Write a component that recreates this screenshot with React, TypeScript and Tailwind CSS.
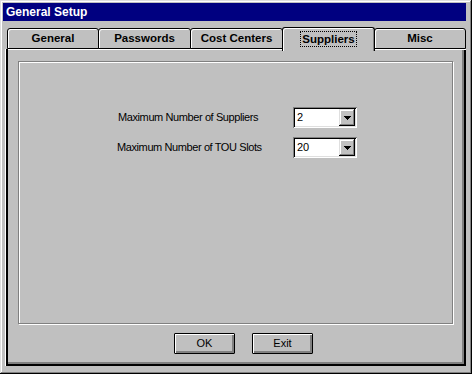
import React from "react";

const tabs = ["General", "Passwords", "Cost Centers", "Suppliers", "Misc"];
const tabWidths = [92, 93, 93, 93, 92];

function Combo({ value }: { value: string }) {
  return (
    <div className="w-[64px] h-[21px] bg-white flex p-[2px] shadow-[inset_1px_1px_0_#808080,inset_-1px_-1px_0_#fff,inset_2px_2px_0_#000,inset_-2px_-2px_0_#dfdfdf]">
      <div className="flex-1 pl-[2px] text-[11px] leading-[17px] text-black">{value}</div>
      <div className="w-[16px] h-[17px] bg-[#c0c0c0] flex items-center justify-center shadow-[inset_-1px_-1px_0_#000,inset_1px_1px_0_#dfdfdf,inset_-2px_-2px_0_#808080,inset_2px_2px_0_#fff]">
        <svg width="7" height="4" viewBox="0 0 7 4" shapeRendering="crispEdges">
          <path d="M0 0h7v1H0zM1 1h5v1H1zM2 2h3v1H2zM3 3h1v1H3z" fill="#000" />
        </svg>
      </div>
    </div>
  );
}

function Button({ label }: { label: string }) {
  return (
    <div className="w-[61px] h-[21px] border border-black rounded-[1px] bg-[#c0c0c0] flex items-center justify-center text-[11px] text-black shadow-[inset_1px_1px_0_#fff,inset_-2px_-2px_0_#808080]">
      {label}
    </div>
  );
}

export default function App() {
  return (
    <div className="w-[472px] h-[374px] bg-[#c0c0c0] pt-[3px] pl-[3px] pr-[6px] font-['Liberation_Sans',Arial,sans-serif] shadow-[inset_-1px_-1px_0_#000,inset_1px_1px_0_#dfdfdf,inset_-2px_-2px_0_#808080,inset_2px_2px_0_#fff]">
      <div className="h-[18px] bg-[#000080] flex items-center pl-[3px] text-white font-bold text-[12px]">
        General Setup
      </div>

      <div className="ml-[2px] mt-[6px] w-[461px]">
        <div className="flex h-[22px] pl-[2px] items-start">
          {tabs.map((t, i) => {
            const selected = t === "Suppliers";
            return (
              <div
                key={t}
                style={{ width: tabWidths[i] }}
                className={
                  selected
                    ? "relative z-10 -ml-px h-[24px] bg-[#c0c0c0] border-l border-t border-r border-black rounded-t-[3px] flex justify-center pt-[3px] shadow-[inset_1px_1px_0_#fff,inset_-1px_0_0_#808080]"
                    : "relative -ml-px first:ml-0 mt-[1px] h-[21px] bg-[#c0c0c0] border border-black rounded-t-[3px] flex justify-center items-center shadow-[inset_1px_1px_0_#fff]"
                }
              >
                <span
                  className={
                    selected
                      ? "border border-dotted border-black px-[1px] h-[16px] leading-[14px] text-[11.5px] font-bold text-black"
                      : "text-[11.5px] font-bold text-black"
                  }
                >
                  {t}
                </span>
              </div>
            );
          })}
        </div>

        <div className="relative h-[317px] pl-[13px] pt-[12px] shadow-[inset_1px_0_0_#fff,inset_3px_0_0_#000,inset_0_1px_0_#fff,inset_-2px_-2px_0_#000,inset_-4px_-4px_0_#808080]">
          <div className="w-[435px] h-[263px] border border-[#808080] shadow-[1px_1px_0_#fff,inset_1px_1px_0_#fff] pt-[45px] pl-[98px] flex flex-col gap-[9px]">
            <div className="flex items-center h-[21px]">
              <div className="w-[176px] pl-[1px] text-[11px] tracking-[-0.4px] text-black">Maximum Number of Suppliers</div>
              <Combo value="2" />
            </div>
            <div className="flex items-center h-[21px]">
              <div className="w-[176px] text-[11px] tracking-[-0.4px] text-black">Maximum Number of TOU Slots</div>
              <Combo value="20" />
            </div>
          </div>

          <div className="flex gap-[17px] mt-[9px] ml-[156px]">
            <Button label="OK" />
            <Button label="Exit" />
          </div>
        </div>
      </div>
    </div>
  );
}
